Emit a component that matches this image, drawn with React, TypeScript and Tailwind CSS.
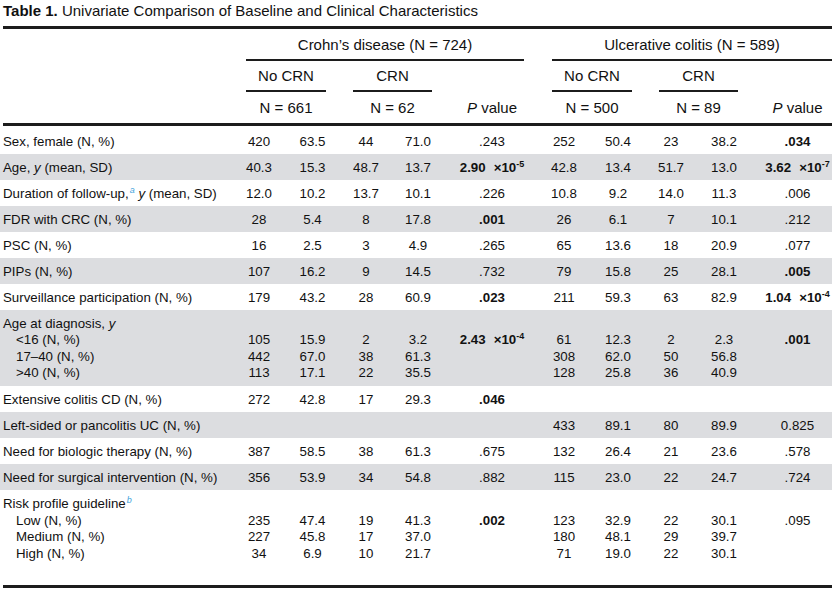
import React from "react";

const GRID =
  "grid grid-cols-[229px_54px_53px_54px_50px_98px_46px_62px_44px_62px_77px]";

function Sci({ m, e }: { m: string; e: string }) {
  return (
    <span className="font-bold whitespace-nowrap">
      {m}
      <span className="ml-[8px]">×10</span>
      <span className="relative -top-[5px] text-[9px] leading-none">{e}</span>
    </span>
  );
}

function Note({ c }: { c: string }) {
  return (
    <span className="relative -top-[5px] ml-[1px] text-[9px] italic leading-none text-[#3ea3dc]">
      {c}
    </span>
  );
}

const B = ({ children }: { children: React.ReactNode }) => (
  <span className="font-bold">{children}</span>
);

type Row = { label: React.ReactNode; cells: React.ReactNode[]; gray?: boolean };

const rows: Row[] = [
  { label: "Sex, female (N, %)", cells: ["420", "63.5", "44", "71.0", ".243", "252", "50.4", "23", "38.2", <B>.034</B>] },
  {
    label: <>Age, <i>y</i> (mean, SD)</>,
    cells: ["40.3", "15.3", "48.7", "13.7", <Sci m="2.90" e="-5" />, "42.8", "13.4", "51.7", "13.0", <Sci m="3.62" e="-7" />],
    gray: true,
  },
  {
    label: <>Duration of follow-up,<Note c="a" /> <i>y</i> (mean, SD)</>,
    cells: ["12.0", "10.2", "13.7", "10.1", ".226", "10.8", "9.2", "14.0", "11.3", ".006"],
  },
  { label: "FDR with CRC (N, %)", cells: ["28", "5.4", "8", "17.8", <B>.001</B>, "26", "6.1", "7", "10.1", ".212"], gray: true },
  { label: "PSC (N, %)", cells: ["16", "2.5", "3", "4.9", ".265", "65", "13.6", "18", "20.9", ".077"] },
  { label: "PIPs (N, %)", cells: ["107", "16.2", "9", "14.5", ".732", "79", "15.8", "25", "28.1", <B>.005</B>], gray: true },
  {
    label: "Surveillance participation (N, %)",
    cells: ["179", "43.2", "28", "60.9", <B>.023</B>, "211", "59.3", "63", "82.9", <Sci m="1.04" e="-4" />],
  },
];

const rowsAfter: Row[] = [
  { label: "Extensive colitis CD (N, %)", cells: ["272", "42.8", "17", "29.3", <B>.046</B>, "", "", "", "", ""] },
  { label: "Left-sided or pancolitis UC (N, %)", cells: ["", "", "", "", "", "433", "89.1", "80", "89.9", "0.825"], gray: true },
  { label: "Need for biologic therapy (N, %)", cells: ["387", "58.5", "38", "61.3", ".675", "132", "26.4", "21", "23.6", ".578"] },
  { label: "Need for surgical intervention (N, %)", cells: ["356", "53.9", "34", "54.8", ".882", "115", "23.0", "22", "24.7", ".724"], gray: true },
];

type Block = { head: React.ReactNode; subs: string[]; cols: React.ReactNode[][] };

const ageBlock: Block = {
  head: <>Age at diagnosis, <i>y</i></>,
  subs: ["<16 (N, %)", "17–40 (N, %)", ">40 (N, %)"],
  cols: [
    ["105", "442", "113"],
    ["15.9", "67.0", "17.1"],
    ["2", "38", "22"],
    ["3.2", "61.3", "35.5"],
    [<Sci m="2.43" e="-4" />, "", ""],
    ["61", "308", "128"],
    ["12.3", "62.0", "25.8"],
    ["2", "50", "36"],
    ["2.3", "56.8", "40.9"],
    [<B>.001</B>, "", ""],
  ],
};

const riskBlock: Block = {
  head: <>Risk profile guideline<Note c="b" /></>,
  subs: ["Low (N, %)", "Medium (N, %)", "High (N, %)"],
  cols: [
    ["235", "227", "34"],
    ["47.4", "45.8", "6.9"],
    ["19", "17", "10"],
    ["41.3", "37.0", "21.7"],
    [<B>.002</B>, "", ""],
    ["123", "180", "71"],
    ["32.9", "48.1", "19.0"],
    ["22", "29", "22"],
    ["30.1", "39.7", "30.1"],
    [".095", "", ""],
  ],
};

function SimpleRow({ r }: { r: Row }) {
  return (
    <div
      className={`${GRID} -ml-[3px] w-[832px] pl-[3px] h-[26px] items-center ${
        r.gray ? "bg-[#dcdde0]" : ""
      }`}
    >
      <div className="whitespace-nowrap">{r.label}</div>
      {r.cells.map((c, i) => (
        <div key={i} className={`text-center whitespace-nowrap ${i === 9 ? "pl-2" : ""}`}>
          {c}
        </div>
      ))}
    </div>
  );
}

function BlockRow({ b, gray, lh, pb }: { b: Block; gray?: boolean; lh: string; pb: string }) {
  return (
    <div
      className={`${GRID} -ml-[3px] w-[832px] pl-[3px] pt-[6px] ${pb} items-start ${lh} ${
        gray ? "bg-[#dcdde0]" : ""
      }`}
    >
      <div className="whitespace-nowrap">
        <div>{b.head}</div>
        {b.subs.map((s, i) => (
          <div key={i} className="pl-[13px]">
            {s}
          </div>
        ))}
      </div>
      {b.cols.map((col, i) => (
        <div key={i} className={`text-center whitespace-nowrap ${i === 9 ? "pl-2" : ""}`}>
          <div>&nbsp;</div>
          {col.map((c, j) => (
            <div key={j}>{c === "" ? "\u00a0" : c}</div>
          ))}
        </div>
      ))}
    </div>
  );
}

export default function App() {
  return (
    <div className="w-[839px] h-[595px] overflow-hidden bg-white text-[#111] font-['Liberation_Sans',Arial,sans-serif]">
      <div className="ml-[3px] w-[829px]">
        <div className="pt-[2px] text-[15px] leading-[17px] whitespace-nowrap">
          <span className="font-bold">Table 1.</span> Univariate Comparison of Baseline and Clinical
          Characteristics
        </div>
        <div className="mt-[7px] h-[3px] bg-[#1c1c1c]" />

        {/* group headings */}
        <div className="flex text-[15px] leading-[17px] mt-[7px]">
          <div className="ml-[243px] w-[278px] flex flex-col">
            <div className="text-center">Crohn’s disease (N = 724)</div>
            <div className="mt-[6px] h-[2px] bg-[#1c1c1c]" />
          </div>
          <div className="ml-[28px] w-[280px] flex flex-col">
            <div className="text-center">Ulcerative colitis (N = 589)</div>
            <div className="mt-[6px] h-[2px] bg-[#1c1c1c]" />
          </div>
        </div>

        <div className="flex text-[15px] leading-[17px] mt-[6px]">
          <div className="ml-[243px] w-[80px] flex flex-col">
            <div className="text-center">No CRN</div>
            <div className="mt-[6px] h-[2px] bg-[#1c1c1c]" />
          </div>
          <div className="ml-[27px] w-[79px] flex flex-col">
            <div className="text-center">CRN</div>
            <div className="mt-[6px] h-[2px] bg-[#1c1c1c]" />
          </div>
          <div className="ml-[120px] w-[80px] flex flex-col">
            <div className="text-center">No CRN</div>
            <div className="mt-[6px] h-[2px] bg-[#1c1c1c]" />
          </div>
          <div className="ml-[27px] w-[79px] flex flex-col">
            <div className="text-center">CRN</div>
            <div className="mt-[6px] h-[2px] bg-[#1c1c1c]" />
          </div>
        </div>

        <div className="flex text-[15px] leading-[17px] mt-[7px] whitespace-nowrap">
          <div className="ml-[243px] w-[80px] text-center">N = 661</div>
          <div className="ml-[27px] w-[79px] text-center">N = 62</div>
          <div className="w-[120px] text-center">
            <i>P</i> value
          </div>
          <div className="w-[80px] text-center">N = 500</div>
          <div className="ml-[27px] w-[79px] text-center">N = 89</div>
          <div className="ml-[25px] w-[69px] text-center">
            <i>P</i> value
          </div>
        </div>
        <div className="mt-[7px] h-[3px] bg-[#1c1c1c]" />

        {/* body */}
        <div className="mt-[2px] text-[13.3px] leading-[15px]">
          {rows.map((r, i) => (
            <SimpleRow key={i} r={r} />
          ))}
          <BlockRow b={ageBlock} gray lh="leading-[16.3px]" pb="pb-[5px]" />
          {rowsAfter.map((r, i) => (
            <SimpleRow key={i} r={r} />
          ))}
          <BlockRow b={riskBlock} lh="leading-[16.5px]" pb="pb-[23px]" />
        </div>
        <div className="h-[3px] bg-[#1c1c1c]" />
      </div>
    </div>
  );
}
